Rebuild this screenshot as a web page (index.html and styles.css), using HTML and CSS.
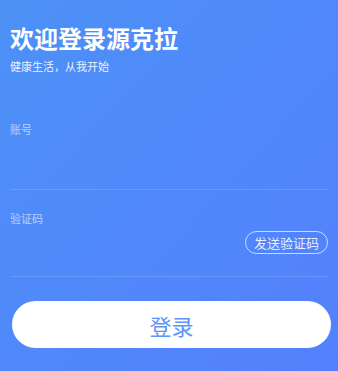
FILE: index.html
```
<!DOCTYPE html>
<html lang="zh-CN">

<head>
	<meta charset="UTF-8">
	<meta name="viewport" content="width=device-width, initial-scale=1.0">
	<title>登录</title>
	<link rel="stylesheet" href="styles.css">
</head>

<body>
	<div class="login">
		<div class="header">
			<h1>欢迎登录源克拉</h1>
			<p>健康生活，从我开始</p>
		</div>
		<div class="form">
			<div class="field">
				<label for="account">账号</label>
				<div class="input-row first">
					<input type="text" id="account">
				</div>
			</div>
			<div class="field">
				<label for="code">验证码</label>
				<div class="input-row">
					<input type="text" id="code">
					<button class="send-code">发送验证码</button>
				</div>
			</div>
			<button class="submit">登录</button>
		</div>
	</div>
</body>

</html>
```

FILE: styles.css
```
body {
	margin: 0;
	font-family: "Noto Sans CJK SC", "Noto Sans", sans-serif;
	color: #fff;
}

.login {
	min-height: 100vh;
	box-sizing: border-box;
	padding: 21px 10px 20px;
	background: linear-gradient(to bottom right, #4d91f6, #5480fd);
}

.header h1 {
	margin: 0;
	font-size: 24px;
	line-height: 34px;
	font-weight: bold;
}

.header p {
	margin: 3px 0 0;
	font-size: 11px;
	line-height: 16px;
	color: rgba(255, 255, 255, 0.9);
}

.form {
	margin-top: 27px;
}

.field {
	padding-top: 20px;
	border-bottom: 1px solid rgba(255, 255, 255, 0.14);
}

.field label {
	display: block;
	font-size: 11px;
	line-height: 16px;
	color: rgba(255, 255, 255, 0.6);
}

.input-row {
	display: flex;
	align-items: flex-start;
	height: 45px;
	padding-top: 5px;
}

.input-row.first {
	height: 47px;
}

.input-row input {
	flex: 1;
	min-width: 0;
	height: 23px;
	padding: 0;
	border: none;
	outline: none;
	background: transparent;
	color: #fff;
	font-size: 14px;
}

.send-code {
	height: 23px;
	padding: 0 8px;
	border: 1px solid rgba(255, 255, 255, 0.7);
	border-radius: 12px;
	background: transparent;
	color: rgba(255, 255, 255, 0.88);
	font-family: inherit;
	font-size: 13px;
	line-height: 21px;
}

.submit {
	display: block;
	width: 319px;
	height: 47px;
	margin: 24px 0 0 2px;
	border: none;
	border-radius: 24px;
	background: #fff;
	color: #5b95f6;
	font-family: inherit;
	font-size: 22px;
}
```
